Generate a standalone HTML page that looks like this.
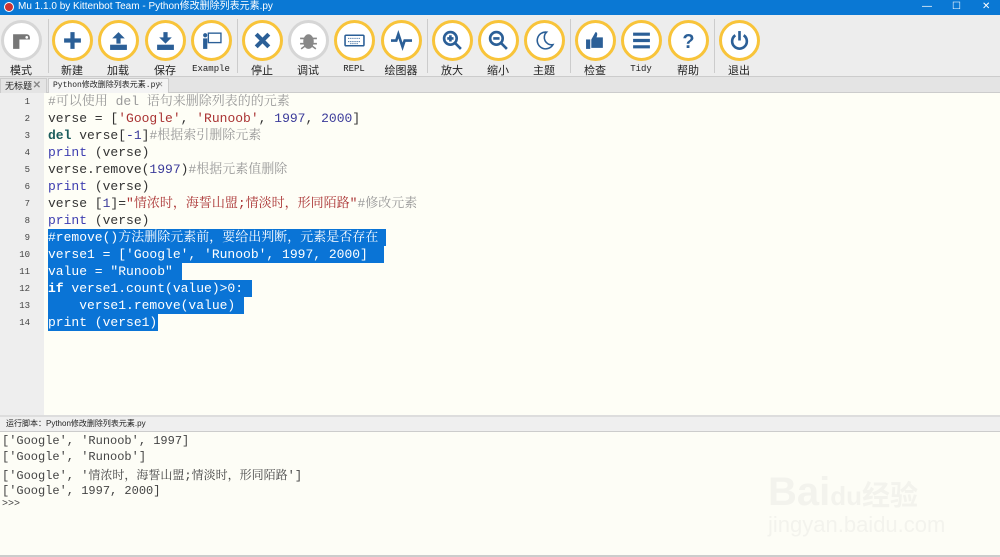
<!DOCTYPE html>
<html><head><meta charset="utf-8"><style>
*{margin:0;padding:0;box-sizing:border-box}
body{width:1000px;height:557px;overflow:hidden;background:#fdfdf6;font-family:"Liberation Sans","Noto Sans CJK SC",sans-serif;position:relative}
.title{position:absolute;left:0;top:0;width:1000px;height:15px;background:#0a78d4;color:#fff;font-size:10px;line-height:14px;padding-left:18px}
.title .ic{position:absolute;left:4px;top:2px;width:10px;height:10px;border-radius:50%;background:#c33;border:1px solid #fff}
.tb{position:absolute;left:0;top:15px;width:1000px;height:62px;background:#ededed;border-bottom:1px solid #ccc}
.b{position:absolute;top:5px;width:41px;height:41px;border-radius:50%;border:3px solid #f8c43a;background:#fff}
.b.g{border-color:#d6d6d6}
.b svg{position:absolute;left:7px;top:7px;width:21px;height:21px}
.l{position:absolute;top:47px;width:60px;text-align:center;font-size:11px;color:#222}
.l.m{font-family:"Liberation Mono",monospace;font-size:9px;top:49px}
.sep{position:absolute;top:4px;width:1px;height:54px;background:#ccc}
.tabs{position:absolute;top:77px;left:0;width:1000px;height:16px;background:#e4e4e4;border-bottom:1px solid #ccc}
.tab{position:absolute;top:1px;height:15px;font-size:9px;line-height:14px;padding-left:4px;color:#222;border:1px solid #ccc;border-bottom:none;white-space:nowrap}
.tab b{position:absolute;right:5px;top:0;color:#888;font-weight:bold;font-size:10px}
.gut{position:absolute;left:0;top:93px;width:44px;height:322px;background:#eeeeee}
.ed{position:absolute;left:44px;top:93px;width:956px;height:322px;background:#fefef6}
.ln{position:absolute;left:0;width:30px;text-align:right;font-family:"Liberation Mono",monospace;font-size:9px;color:#444}
.cl{position:absolute;left:48px;height:17px;font-family:"Liberation Mono","Noto Serif CJK SC",monospace;font-size:13px;line-height:17px;white-space:pre;color:#333}
.sel{background:#0a74d6;color:#fff!important}
.sel span{color:#fff!important}
.c{color:#999;font-family:"Liberation Mono","Noto Serif CJK SC",monospace}
.s{color:#a33}.n{color:#3b3b9a}.k{color:#1a5c5c;font-weight:bold}.p{color:#3d3db0}
.stat{position:absolute;left:0;top:415px;width:1000px;height:17px;background:#efefef;border-top:2px solid #ddd;border-bottom:1px solid #ccc;font-size:8px;line-height:14px;padding-left:6px;color:#222}
.out{position:absolute;left:2px;font-family:"Liberation Mono","Noto Serif CJK SC",monospace;font-size:12px;white-space:pre;color:#444}
</style></head><body>
<div class="title"><span class="ic"></span>Mu 1.1.0 by Kittenbot Team - Python修改删除列表元素.py
<span style="position:absolute;left:922px;top:0">—</span><span style="position:absolute;left:952px;top:0">☐</span><span style="position:absolute;left:982px;top:0">✕</span></div>
<div class="tb">
<div class="b g" style="left:1px"><svg viewBox="0 0 20 20"><path d="M2 4h13a3 3 0 0 1 3 3v2h-10v9h-6z" fill="#777"/><circle cx="15" cy="7" r="1.3" fill="#fff"/></svg></div><div class="l" style="left:-9px">模式</div>
<div class="sep" style="left:48px"></div>
<div class="b" style="left:52px"><svg viewBox="0 0 20 20"><path d="M10 2v16M2 10h16" stroke="#2b5f97" stroke-width="4"/></svg></div><div class="l" style="left:42px">新建</div>
<div class="b" style="left:98px"><svg viewBox="0 0 20 20"><path d="M10 2l-6 6h4v5h4v-5h4z" fill="#2b5f97"/><rect x="2" y="14" width="16" height="5" fill="#2b5f97"/></svg></div><div class="l" style="left:88px">加载</div>
<div class="b" style="left:145px"><svg viewBox="0 0 20 20"><path d="M10 13l-6-6h4v-5h4v5h4z" fill="#2b5f97"/><rect x="2" y="14" width="16" height="5" fill="#2b5f97"/></svg></div><div class="l" style="left:135px">保存</div>
<div class="b" style="left:191px"><svg viewBox="0 0 20 20"><rect x="7" y="3" width="12" height="9" fill="none" stroke="#2b5f97" stroke-width="1.3"/><circle cx="4" cy="5" r="2" fill="#2b5f97"/><rect x="2" y="8" width="4" height="10" fill="#2b5f97"/></svg></div><div class="l m" style="left:181px">Example</div>
<div class="sep" style="left:237px"></div>
<div class="b" style="left:242px"><svg viewBox="0 0 20 20"><path d="M4 4l12 12M16 4l-12 12" stroke="#2b5f97" stroke-width="4"/></svg></div><div class="l" style="left:232px">停止</div>
<div class="b g" style="left:288px"><svg viewBox="0 0 20 20"><ellipse cx="10" cy="11" rx="5" ry="7" fill="#888"/><path d="M2 8h16M2 13h16M3 18l4-3M17 18l-4-3" stroke="#888" stroke-width="1.5"/></svg></div><div class="l" style="left:278px">调试</div>
<div class="b" style="left:334px"><svg viewBox="0 0 20 20"><rect x="1" y="5" width="18" height="10" rx="1" fill="none" stroke="#2b5f97" stroke-width="1.5"/><path d="M4 8h12M4 11h12M6 13h8" stroke="#2b5f97" stroke-dasharray="1 1"/></svg></div><div class="l m" style="left:324px">REPL</div>
<div class="b" style="left:381px"><svg viewBox="0 0 20 20"><path d="M0 10h5l2-6 4 12 2-6h7" fill="none" stroke="#2b5f97" stroke-width="2.5"/></svg></div><div class="l" style="left:371px">绘图器</div>
<div class="sep" style="left:427px"></div>
<div class="b" style="left:432px"><svg viewBox="0 0 20 20"><circle cx="8" cy="8" r="6" fill="none" stroke="#2b5f97" stroke-width="2.5"/><path d="M12 12l6 6M5 8h6M8 5v6" stroke="#2b5f97" stroke-width="2.5"/></svg></div><div class="l" style="left:422px">放大</div>
<div class="b" style="left:478px"><svg viewBox="0 0 20 20"><circle cx="8" cy="8" r="6" fill="none" stroke="#2b5f97" stroke-width="2.5"/><path d="M12 12l6 6M5 8h6" stroke="#2b5f97" stroke-width="2.5"/></svg></div><div class="l" style="left:468px">缩小</div>
<div class="b" style="left:524px"><svg viewBox="0 0 20 20"><path d="M12 2a8 8 0 1 0 6 12a7 7 0 0 1-6-12z" fill="none" stroke="#2b5f97" stroke-width="1.5"/></svg></div><div class="l" style="left:514px">主题</div>
<div class="sep" style="left:570px"></div>
<div class="b" style="left:575px"><svg viewBox="0 0 20 20"><rect x="1" y="9" width="4" height="9" fill="#2b5f97"/><path d="M6 9l4-7c2 0 2 2 1 5h6v10h-11z" fill="#2b5f97"/></svg></div><div class="l" style="left:565px">检查</div>
<div class="b" style="left:621px"><svg viewBox="0 0 20 20"><path d="M2 4h16M2 10h16M2 16h16" stroke="#2b5f97" stroke-width="3"/></svg></div><div class="l m" style="left:611px">Tidy</div>
<div class="b" style="left:668px"><svg viewBox="0 0 20 20"><text x="10" y="17" text-anchor="middle" font-size="19" font-weight="bold" fill="#2b5f97" font-family="Liberation Sans">?</text></svg></div><div class="l" style="left:658px">帮助</div>
<div class="sep" style="left:714px"></div>
<div class="b" style="left:719px"><svg viewBox="0 0 20 20"><path d="M6 5a7 7 0 1 0 8 0" fill="none" stroke="#2b5f97" stroke-width="2.5"/><path d="M10 1v9" stroke="#2b5f97" stroke-width="2.5"/></svg></div><div class="l" style="left:709px">退出</div>
</div>
<div class="tabs">
<div class="tab" style="left:0;width:47px;background:#e4e4e4">无标题<b>✕</b></div>
<div class="tab" style="left:48px;width:121px;background:#f4f4f4;font-family:'Liberation Mono','Noto Sans CJK SC',monospace;font-size:8px">Python修改删除列表元素.py<b>✕</b></div>
</div>
<div class="gut"></div><div class="ed"></div>
<div class="ln" style="top:97px">1</div><div class="ln" style="top:114px">2</div><div class="ln" style="top:131px">3</div><div class="ln" style="top:148px">4</div><div class="ln" style="top:165px">5</div><div class="ln" style="top:182px">6</div><div class="ln" style="top:199px">7</div><div class="ln" style="top:216px">8</div><div class="ln" style="top:233px">9</div><div class="ln" style="top:250px">10</div><div class="ln" style="top:267px">11</div><div class="ln" style="top:284px">12</div><div class="ln" style="top:301px">13</div><div class="ln" style="top:318px">14</div>
<div class="cl c" style="top:93px">#可以使用 del 语句来删除列表的的元素</div>
<div class="cl" style="top:110px">verse = [<span class="s">'Google'</span>, <span class="s">'Runoob'</span>, <span class="n">1997</span>, <span class="n">2000</span>]</div>
<div class="cl" style="top:127px"><span class="k">del</span> verse[<span class="n">-1</span>]<span class="c">#根据索引删除元素</span></div>
<div class="cl" style="top:144px"><span class="p">print</span> (verse)</div>
<div class="cl" style="top:161px">verse.remove(<span class="n">1997</span>)<span class="c">#根据元素值删除</span></div>
<div class="cl" style="top:178px"><span class="p">print</span> (verse)</div>
<div class="cl" style="top:195px">verse [<span class="n">1</span>]=<span class="s">"情浓时，海誓山盟;情淡时，形同陌路"</span><span class="c">#修改元素</span></div>
<div class="cl" style="top:212px"><span class="p">print</span> (verse)</div>
<div class="cl sel" style="top:229px;width:338px">#remove()方法删除元素前，要给出判断，元素是否存在</div>
<div class="cl sel" style="top:246px;width:336px">verse1 = ['Google', 'Runoob', 1997, 2000]</div>
<div class="cl sel" style="top:263px;width:134px">value = "Runoob"</div>
<div class="cl sel" style="top:280px;width:204px"><b>if</b> verse1.count(value)&gt;0:</div>
<div class="cl sel" style="top:297px;width:196px">    verse1.remove(value)</div>
<div class="cl sel" style="top:314px;width:110px">print (verse1)</div>
<div class="stat">运行脚本：Python修改删除列表元素.py</div>
<div class="out" style="top:434px">['Google', 'Runoob', 1997]</div>
<div class="out" style="top:450px">['Google', 'Runoob']</div>
<div class="out" style="top:466px">['Google', '情浓时，海誓山盟;情淡时，形同陌路']</div>
<div class="out" style="top:484px">['Google', 1997, 2000]</div>
<div class="out" style="top:499px;font-size:10px">&gt;&gt;&gt;</div>
<div style="position:absolute;left:768px;top:470px;font-size:40px;font-weight:bold;color:#f3f3ed;font-family:'Liberation Sans',sans-serif">Bai<span style="font-size:26px">du</span><span style="font-family:'Noto Sans CJK SC',sans-serif;font-size:28px">经验</span></div>
<div style="position:absolute;left:768px;top:512px;font-size:22px;color:#f3f3ed">jingyan.baidu.com</div>
<div style="position:absolute;left:0;top:555px;width:1000px;height:2px;background:#ccc"></div>
</body></html>
